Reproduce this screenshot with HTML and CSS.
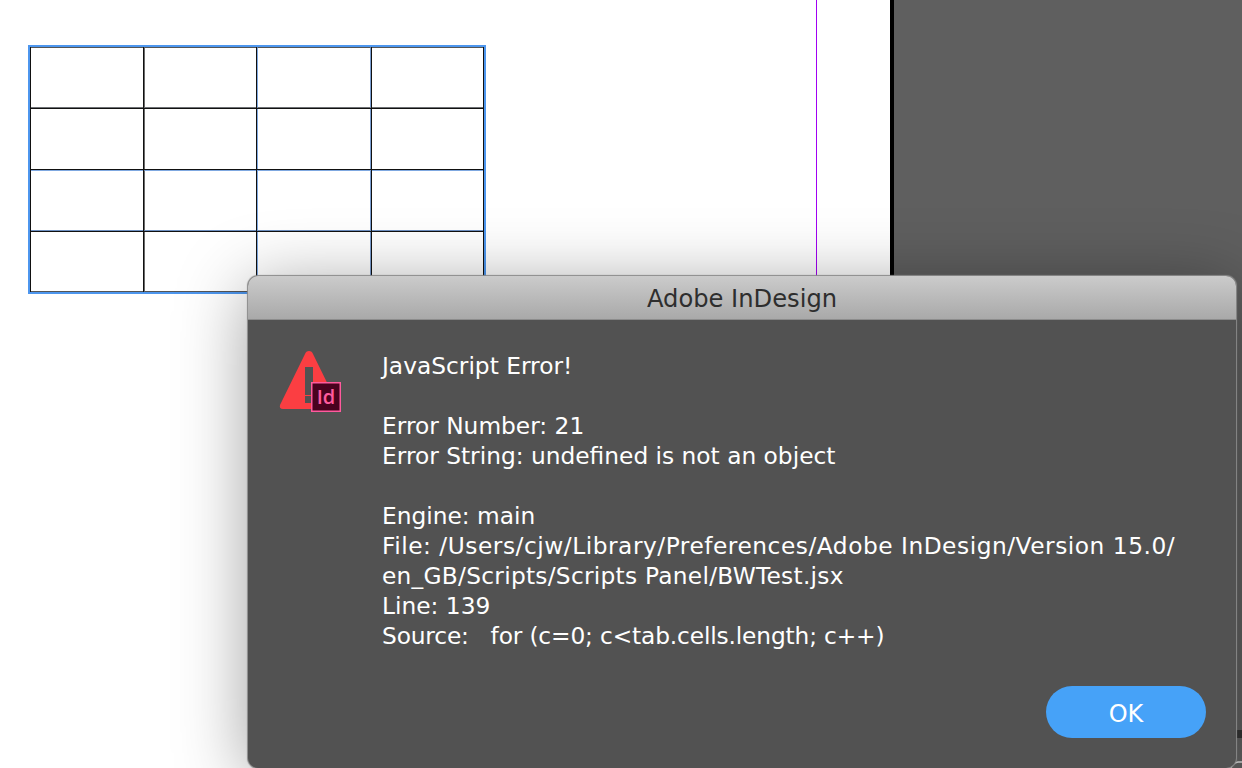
FILE: index.html
```html
<!DOCTYPE html>
<html lang="en">

<head>
    <meta charset="UTF-8">
    <title>Adobe InDesign</title>
    <link rel="stylesheet" href="styles.css">
</head>

<body>
    <main class="desk">
        <section class="page">
            <div class="doc-table">
                <div class="cell"></div><div class="cell"></div><div class="cell"></div><div class="cell"></div>
                <div class="cell"></div><div class="cell"></div><div class="cell"></div><div class="cell"></div>
                <div class="cell"></div><div class="cell"></div><div class="cell"></div><div class="cell"></div>
                <div class="cell"></div><div class="cell"></div><div class="cell"></div><div class="cell"></div>
            </div>
            <div class="guide"></div>
        </section>
        <section class="pasteboard">
            <div class="scroll-notch"></div>
            <svg class="corner-arc" width="12" height="12" viewBox="0 0 12 12">
                <path d="M1 12 Q2 7 8 6 L12 6" fill="none" stroke="#d8d8d8" stroke-width="1.6" />
            </svg>
        </section>

        <section class="dialog">
            <h1 class="dialog-title">Adobe InDesign</h1>
            <div class="dialog-body">
                <svg class="alert-icon" width="63" height="63" viewBox="0 0 63 63">
                    <path d="M30 1 Q27 1 26 4 L1 55 Q0 59 4 59 L56 59 Q60 59 59 55 L34 4 Q33 1 30 1 Z" fill="#fb3e42" />
                    <rect x="26" y="17" width="8" height="28" fill="#525252" />
                    <rect x="26" y="46" width="8" height="7" fill="#525252" />
                    <rect x="32.75" y="32.75" width="28.5" height="28.5" fill="#49021f" stroke="#ff5a9d" stroke-width="1.5" />
                    <text class="badge-text" x="47" y="53.5" text-anchor="middle">Id</text>
                </svg>
                <div class="message">
                    <p>JavaScript Error!</p>
                    <p>Error Number: 21<br>Error String: undefined is not an object</p>
                    <p>Engine: main<br><span class="file-line">File: /Users/cjw/Library/Preferences/Adobe InDesign/Version 15.0/</span><br><span class="path-line">en_GB/Scripts/Scripts Panel/BWTest.jsx</span><br>Line: 139<br><span class="source-line">Source: &nbsp; for (c=0; c&lt;tab.cells.length; c++)</span></p>
                </div>
            </div>
            <div class="dialog-actions">
                <button class="ok-button">OK</button>
            </div>
        </section>
    </main>
</body>

</html>
```

FILE: styles.css
```css
html,
body {
    margin: 0;
    height: 100%;
    overflow: hidden;
}

body {
    font-family: "DejaVu Sans", "Open Sans", sans-serif;
}

.desk {
    position: relative;
    display: flex;
    width: 1242px;
    height: 768px;
    overflow: hidden;
}

.page {
    position: relative;
    box-sizing: border-box;
    flex: 0 0 894px;
    padding: 45px 0 0 28px;
    background: #fff;
    border-right: 4px solid #000;
}

.pasteboard {
    position: relative;
    flex: 1;
    background: #5f5f5f;
}

.doc-table {
    display: grid;
    grid-template-columns: 112px 112px 114px 1fr;
    grid-template-rows: 61px 60px 61px 1fr;
    gap: 1px;
    box-sizing: border-box;
    width: 458px;
    height: 249px;
    padding: 0 1px;
    background: #111;
    border: 2px solid #4d96ee;
}

.cell {
    background: #fff;
}

/* rules are a dark line and a tinted line, side differs per row and column */
.cell:nth-child(-n+4) {
    border-top: 1px solid #555;
    border-bottom: 1px solid #6d7074;
}

.cell:nth-child(n+9):nth-child(-n+12) {
    border-top: 1px solid #7fa8e0;
    border-bottom: 1px solid #6d8fc0;
}

.cell:nth-child(n+13) {
    border-bottom: 1px solid #555;
}

.cell:nth-child(4n+2) {
    border-left: 1px solid #6a6a6a;
}

.cell:nth-child(4n+3) {
    border-left: 1px solid #7fa8e0;
    border-right: 1px solid #7a9dd0;
}

.guide {
    position: absolute;
    top: 0;
    bottom: 0;
    left: 816px;
    width: 1px;
    background: #a100f2;
}

.scroll-notch {
    position: absolute;
    top: 730px;
    right: 0;
    width: 6px;
    height: 8px;
    background: #333;
}

.corner-arc {
    position: absolute;
    right: 0;
    bottom: 0;
}

/* dialog window sits over the page */
.dialog {
    position: absolute;
    top: 276px;
    left: 248px;
    right: 6px;
    bottom: 0;
    display: flex;
    flex-direction: column;
    background: #525252;
    border-radius: 10px;
    box-shadow: 0 0 1px 1px #8a8a8a, 0 10px 70px rgba(0, 0, 0, 0.38);
}

.dialog-title {
    margin: 0;
    height: 43px;
    line-height: 47px;
    text-align: center;
    font-size: 24.2px;
    font-weight: 400;
    color: #2e2e2e;
    background: linear-gradient(#cbcbcb, #a9a9a9);
    border-bottom: 1px solid #8c8c8c;
    border-radius: 10px 10px 0 0;
}

.dialog-body {
    display: flex;
    flex: 1;
    gap: 40px;
    padding: 31px 32px 0 31px;
}

.alert-icon {
    flex: none;
    margin-top: -1px;
}

.badge-text {
    font-family: "Open Sans", sans-serif;
    font-size: 20px;
    font-weight: 600;
    fill: #ff5a9d;
}

.message {
    color: #fff;
    font-size: 23.3px;
    line-height: 30px;
}

.message p {
    margin: 0 0 30px;
    white-space: nowrap;
}

/* the original font runs wider on these lines */
.file-line {
    letter-spacing: 0.52px;
}

.path-line {
    letter-spacing: 0.26px;
}

.source-line {
    letter-spacing: -0.15px;
}

.dialog-actions {
    display: flex;
    justify-content: flex-end;
    padding: 0 30px 30px 0;
}

.ok-button {
    width: 160px;
    height: 52px;
    padding: 3px 0 0;
    color: #fff;
    font-family: inherit;
    font-size: 24px;
    background: #46a2f8;
    border: 0;
    border-radius: 26px;
}
```
